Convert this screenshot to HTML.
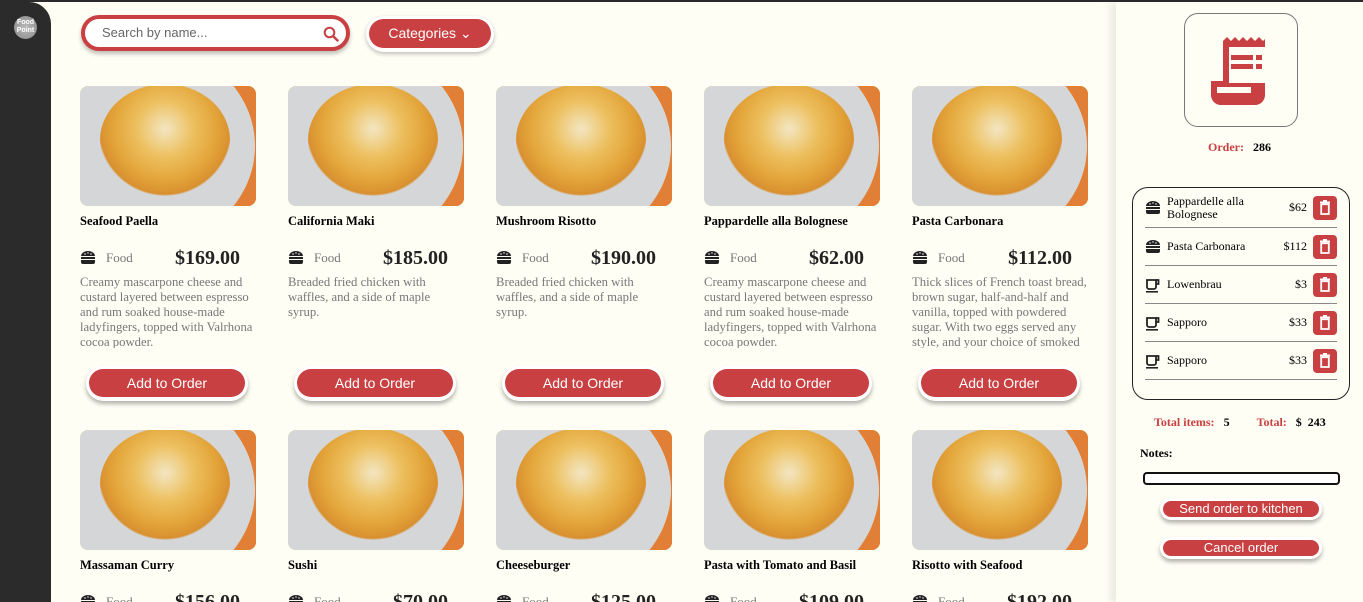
<!DOCTYPE html>
<html><head><meta charset="utf-8"><style>
*{box-sizing:border-box;margin:0;padding:0}
html{width:1363px;height:602px;overflow:hidden}
body{width:1363px;height:602px;overflow:hidden;background:#fffef5;font-family:"Liberation Serif",serif;position:relative;border-top:2px solid #2b2b2b}
.side{position:absolute;left:0;top:0;width:51px;height:602px;background:#2b2b2b;border-top-right-radius:22px}
.logo{position:absolute;left:14px;top:14px;width:23px;height:23px;border-radius:50%;background:radial-gradient(#bbb,#888);font:bold 7px "Liberation Sans",sans-serif;color:#fff;text-align:center;line-height:8px;padding-top:3px}
.search{position:absolute;left:81px;top:13px;width:269px;height:36px;border:4px solid #c94042;border-radius:18px;background:#fff;box-shadow:0 3px 4px rgba(0,0,0,.25);font:13px "Liberation Sans",sans-serif;color:#666;padding:6px 0 0 17px}
.search svg{position:absolute;right:7px;top:7px}
.cat{position:absolute;left:366px;top:14px;width:128px;height:36px;border-radius:18px;background:#fff;box-shadow:0 2px 4px rgba(0,0,0,.25);padding:3px}
.cat div{background:#c94042;border-radius:15px;height:29px;color:#fff;font:14px "Liberation Sans",sans-serif;text-align:center;line-height:29px}
.card{position:absolute;width:176px}
.img{width:176px;height:120px;border-radius:8px;overflow:hidden;position:relative;background:linear-gradient(120deg,#f6d55a,#e0a818)}
.img .plate{position:absolute;left:-40px;top:-40px;width:215px;height:200px;border-radius:50%;background:#d4d6d8}
.img .orng{position:absolute;left:120px;top:-20px;width:90px;height:170px;border-radius:50%;background:#e07f35}
.img .pasta{position:absolute;left:20px;top:-2px;width:130px;height:112px;border-radius:50%;background:radial-gradient(circle at 50% 40%,#f3e6c2 0,#edc060 30%,#e3a53a 55%,#d99030 70%,rgba(210,140,50,0) 72%)}
.t{font-weight:bold;font-size:12.5px;margin-top:8px;color:#000;height:14px}
.row{display:flex;align-items:center;margin-top:20px;height:20px}
.row .f{font-size:13px;color:#777;margin-left:10px;width:42px}
.row .p{font-size:20px;font-weight:bold;color:#222;margin-left:auto;margin-right:16px}
.d{font-size:12.7px;line-height:15px;color:#777;margin-top:7px;height:73px;overflow:hidden}
.btn{position:absolute;left:6px;top:280px;width:162px;height:35px;border-radius:18px;background:#fff;box-shadow:0 3px 4px rgba(0,0,0,.3);padding:3px}
.btn div{background:#c94042;border-radius:15px;height:28px;color:#fff;font:14px "Liberation Sans",sans-serif;text-align:center;line-height:28px}
.panel{position:absolute;left:1116px;top:0;width:247px;height:602px;background:#fffef5;box-shadow:-6px 0 8px rgba(0,0,0,.08)}
.rec{position:absolute;left:68px;top:11px;width:114px;height:114px;border:1px solid #777;border-radius:14px}
.ord{position:absolute;left:0;width:247px;top:138px;text-align:center;font-weight:bold;font-size:12px}
.red{color:#c94042}
.list{position:absolute;left:16px;top:185px;width:218px;height:213px;border:1px solid #222;border-radius:16px;padding:0 12px}
.it{height:38px;border-bottom:1px solid #888;display:flex;align-items:center;font-size:12px;position:relative}
.it .n{margin-left:6px;line-height:13px;width:88px}
.it .pr{margin-left:auto;margin-right:6px}
.tr{width:24px;height:24px;background:#c94042;border-radius:4px;display:flex;align-items:center;justify-content:center}
.tot{position:absolute;top:413px;left:38px;font-weight:bold;font-size:12px}
.notes{position:absolute;left:24px;top:444px;font-weight:bold;font-size:12px}
.ta{position:absolute;left:27px;top:470px;width:197px;height:13px;border:2px solid #111;border-radius:4px;background:#fff}
.b2{position:absolute;left:44px;width:162px;height:22px;border-radius:11px;background:#fff;box-shadow:0 3px 4px rgba(0,0,0,.3);padding:3px}
.b2 div{background:#c94042;border-radius:8px;height:16px;color:#fff;font:13px "Liberation Sans",sans-serif;text-align:center;line-height:16px}
</style></head><body>
<div class="side"><div class="logo">Food<br>Point</div></div>
<div class="search">Search by name...<svg width="16" height="16" viewBox="0 0 16 16"><circle cx="6.5" cy="6.5" r="4.8" fill="none" stroke="#c94042" stroke-width="2"/><path d="M10 10l4.5 4.5" stroke="#c94042" stroke-width="2.4" stroke-linecap="round"/></svg></div>
<div class="cat"><div>Categories &#8964;</div></div>

<svg width="0" height="0" style="position:absolute"><defs>
<g id="burg"><path d="M1 6a7 5 0 0 1 14 0z" fill="#222"/><rect x="1" y="7" width="14" height="2" fill="#222"/><path d="M1 10h14v2a2 2 0 0 1-2 2H3a2 2 0 0 1-2-2z" fill="#222"/><circle cx="5" cy="4" r=".7" fill="#fff"/><circle cx="8" cy="3" r=".7" fill="#fff"/><circle cx="11" cy="4" r=".7" fill="#fff"/></g>
<g id="cup"><path d="M2 3h9v7a2 2 0 0 1-2 2H4a2 2 0 0 1-2-2z" fill="none" stroke="#222" stroke-width="1.8"/><path d="M11 3h2.5v4H11" fill="none" stroke="#222" stroke-width="1.8"/><rect x="1" y="14" width="12" height="1.6" fill="#222"/></g>
<g id="trash"><rect x="1" y="1.5" width="10" height="1.8" fill="#fff"/><rect x="4" y="0" width="4" height="2" fill="#fff"/><path d="M2.2 4.2h7.6v9.8H2.2z" fill="none" stroke="#fff" stroke-width="1.8"/></g>
</defs></svg>

<div id="cards"></div>

<div class="panel">
<div class="rec"><svg width="62" height="68" viewBox="0 0 62 68" style="position:absolute;left:26px;top:23px">
<path d="M12 4l4-4 4 4 4-4 4 4 4-4 4 4 4-4 4 4 4-4 4 4 2-2V58a10 10 0 0 1-10 10H10A10 10 0 0 1 0 58V44H12z" fill="#c94042"/>
<rect x="18" y="10" width="37" height="36" fill="#fffef5"/>
<rect x="6" y="50" width="34" height="6" fill="#fffef5"/>
<rect x="20" y="18" width="22" height="5" fill="#c94042"/><rect x="45" y="18" width="6" height="5" fill="#c94042"/>
<rect x="20" y="27" width="22" height="5" fill="#c94042"/><rect x="45" y="27" width="6" height="5" fill="#c94042"/>
</svg></div>
<div class="ord"><span class="red">Order:</span>&nbsp;&nbsp; 286</div>
<div class="list">
<div class="it" style="height:40px"><svg width="16" height="16"><use href="#burg"/></svg><span class="n">Pappardelle alla Bolognese</span><span class="pr">$62</span><div class="tr"><svg width="12" height="15"><use href="#trash"/></svg></div></div>
<div class="it"><svg width="16" height="16"><use href="#burg"/></svg><span class="n" style="width:110px">Pasta Carbonara</span><span class="pr">$112</span><div class="tr"><svg width="12" height="15"><use href="#trash"/></svg></div></div>
<div class="it"><svg width="16" height="16"><use href="#cup"/></svg><span class="n">Lowenbrau</span><span class="pr">$3</span><div class="tr"><svg width="12" height="15"><use href="#trash"/></svg></div></div>
<div class="it"><svg width="16" height="16"><use href="#cup"/></svg><span class="n">Sapporo</span><span class="pr">$33</span><div class="tr"><svg width="12" height="15"><use href="#trash"/></svg></div></div>
<div class="it"><svg width="16" height="16"><use href="#cup"/></svg><span class="n">Sapporo</span><span class="pr">$33</span><div class="tr"><svg width="12" height="15"><use href="#trash"/></svg></div></div>
</div>
<div class="tot"><span class="red">Total items:</span>&nbsp;&nbsp; 5 &nbsp;&nbsp;&nbsp;&nbsp;&nbsp;&nbsp;&nbsp;&nbsp;<span class="red">Total:</span>&nbsp;&nbsp; $&nbsp; 243</div>
<div class="notes">Notes:</div>
<div class="ta"></div>
<div class="b2" style="top:496px"><div>Send order to kitchen</div></div>
<div class="b2" style="top:535px"><div>Cancel order</div></div>
</div>

<script>
var r1=[["Seafood Paella","$169.00","Creamy mascarpone cheese and custard layered between espresso and rum soaked house-made ladyfingers, topped with Valrhona cocoa powder."],
["California Maki","$185.00","Breaded fried chicken with waffles, and a side of maple syrup."],
["Mushroom Risotto","$190.00","Breaded fried chicken with waffles, and a side of maple syrup."],
["Pappardelle alla Bolognese","$62.00","Creamy mascarpone cheese and custard layered between espresso and rum soaked house-made ladyfingers, topped with Valrhona cocoa powder."],
["Pasta Carbonara","$112.00","Thick slices of French toast bread, brown sugar, half-and-half and vanilla, topped with powdered sugar. With two eggs served any style, and your choice of smoked bacon or smoked ham."]];
var r2=[["Massaman Curry","$156.00"],["Sushi","$70.00"],["Cheeseburger","$125.00"],["Pasta with Tomato and Basil","$109.00"],["Risotto with Seafood","$192.00"]];
var h="";
function card(x,y,t,p,d){return '<div class="card" style="left:'+x+'px;top:'+y+'px"><div class="img"><div class="orng"></div><div class="plate"></div><div class="pasta"></div></div><div class="t">'+t+'</div><div class="row"><svg width="16" height="16"><use href="#burg"/></svg><span class="f">Food</span><span class="p">'+p+'</span></div>'+(d?'<div class="d">'+d+'</div><div class="btn"><div>Add to Order</div></div>':'')+'</div>';}
for(var i=0;i<5;i++){h+=card(80+208*i,84,r1[i][0],r1[i][1],r1[i][2]);h+=card(80+208*i,428,r2[i][0],r2[i][1],"");}
document.getElementById("cards").innerHTML=h;
</script>
</body></html>
